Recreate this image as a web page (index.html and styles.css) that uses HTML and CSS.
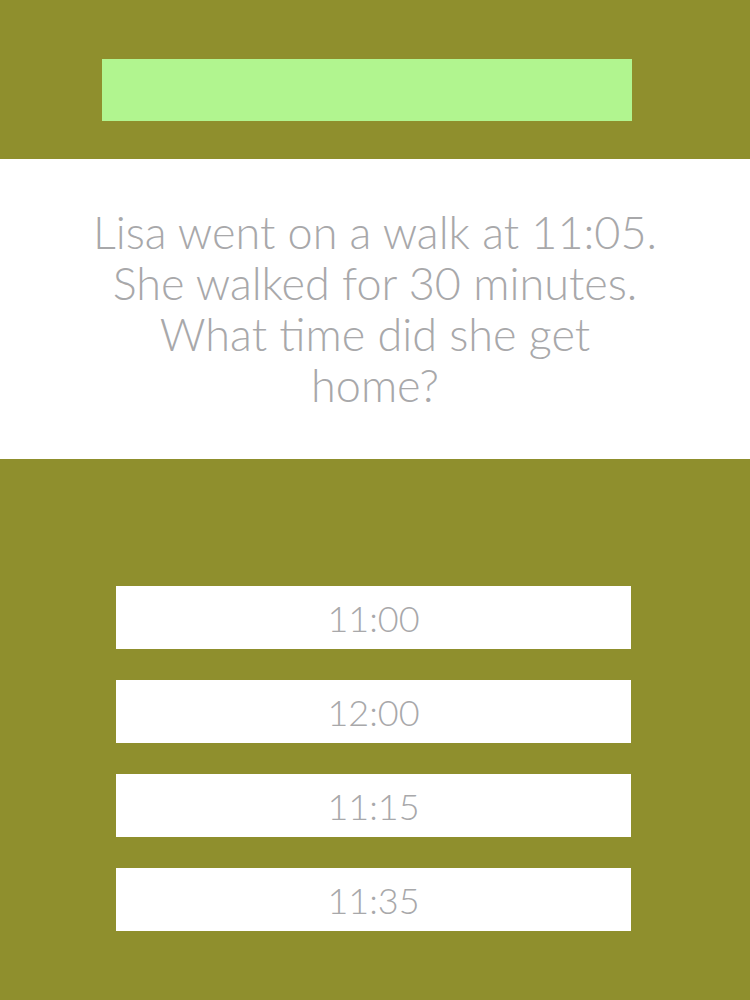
FILE: index.html
```html
<!DOCTYPE html>
<html lang="en">
<head>
    <meta charset="UTF-8">
    <meta name="viewport" content="width=device-width, initial-scale=1.0">
    <title>Time Quiz</title>
    <link rel="stylesheet" href="styles.css">
</head>
<body>
    <div class="top">
        <div class="progress"></div>
    </div>

    <div class="question">
        <p>Lisa went on a walk at 11:05.<br>She walked for 30 minutes.<br>What time did she get<br>home?</p>
    </div>

    <div class="answers">
        <button class="answer">11:00</button>
        <button class="answer">12:00</button>
        <button class="answer">11:15</button>
        <button class="answer">11:35</button>
    </div>
</body>
</html>
```

FILE: styles.css
```css
body {
    font-family: Lato, "Open Sans", sans-serif;
    font-weight: 300;
    margin: 0;
    padding: 0;
    background: #8f8f2d;
    color: #a8a8aa;
}

.top {
    height: 159px;
    padding-top: 59px;
    box-sizing: border-box;
}

.progress {
    width: 530px;
    height: 62px;
    margin-left: 102px;
    background: #b1f58f;
}

.question {
    background: #fff;
    height: 300px;
    display: flex;
    align-items: center;
    justify-content: center;
    text-align: center;
}

.question p {
    margin: 0;
    font-size: 45px;
    line-height: 51px;
}

.answers {
    display: flex;
    flex-direction: column;
    gap: 31px;
    padding-top: 127px;
    padding-left: 116px;
}

.answer {
    width: 515px;
    height: 63px;
    border: none;
    background: #fff;
    color: #a8a8aa;
    font-family: Lato, "Open Sans", sans-serif;
    font-weight: 300;
    font-size: 36px;
    padding: 0;
    cursor: pointer;
}
```
